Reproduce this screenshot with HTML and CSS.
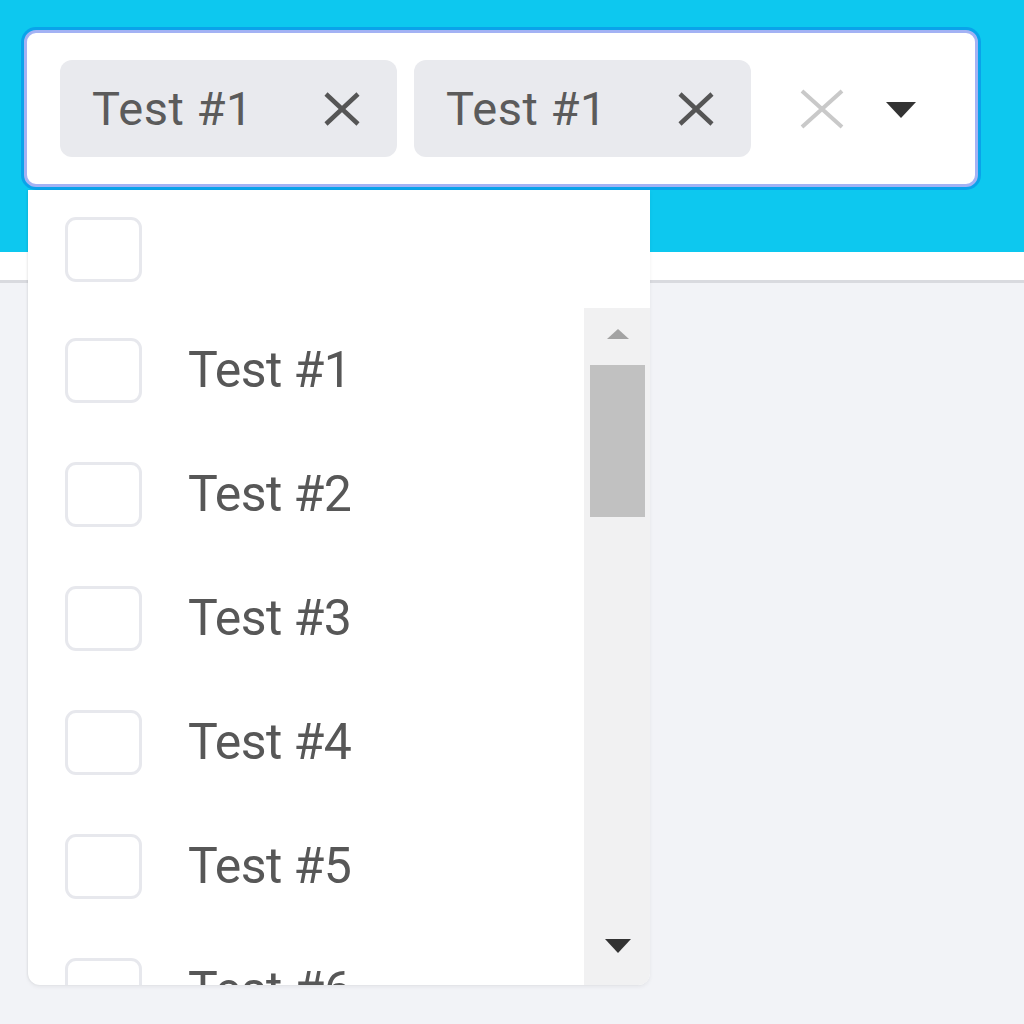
FILE: index.html
```html
<!DOCTYPE html>
<html>
<head>
<meta charset="utf-8">
<link rel="stylesheet" href="styles.css">
</head>
<body>
<header class="top">
  <div class="select-wrap">
    <div class="select">
      <div class="chips">
        <div class="chip"><span class="chip-label">Test #1</span>
          <svg class="chip-x" viewBox="0 0 40 36"><path d="M4 3 L36 33 M36 3 L4 33" stroke="#555" stroke-width="4.5" fill="none"/></svg>
        </div>
        <div class="chip"><span class="chip-label">Test #1</span>
          <svg class="chip-x" viewBox="0 0 40 36"><path d="M4 3 L36 33 M36 3 L4 33" stroke="#555" stroke-width="4.5" fill="none"/></svg>
        </div>
      </div>
      <div class="controls">
        <svg class="clear" viewBox="0 0 46 40"><path d="M3 2 L43 38 M43 2 L3 38" stroke="#c9c9c9" stroke-width="4" fill="none"/></svg>
        <svg class="caret" viewBox="0 0 30 16"><path d="M0 0 H30 L15 16 Z" fill="#333"/></svg>
      </div>
    </div>
    <div class="dropdown">
      <div class="option head">
        <span class="box"></span>
      </div>
      <div class="scroller">
        <div class="list">
          <div class="option"><span class="box"></span><span class="opt-label">Test #1</span></div>
          <div class="option"><span class="box"></span><span class="opt-label">Test #2</span></div>
          <div class="option"><span class="box"></span><span class="opt-label">Test #3</span></div>
          <div class="option"><span class="box"></span><span class="opt-label">Test #4</span></div>
          <div class="option"><span class="box"></span><span class="opt-label">Test #5</span></div>
          <div class="option"><span class="box"></span><span class="opt-label">Test #6</span></div>
        </div>
        <div class="scrollbar">
          <div class="sb-btn up"><svg viewBox="0 0 22 10"><path d="M0 10 H22 L11 0 Z" fill="#a3a3a3"/></svg></div>
          <div class="thumb"></div>
          <div class="sb-space"></div>
          <div class="sb-btn down"><svg viewBox="0 0 26 14"><path d="M0 0 H26 L13 14 Z" fill="#333"/></svg></div>
        </div>
      </div>
    </div>
  </div>
</header>
<div class="strip"></div>
<main class="page"></main>
</body>
</html>
```
FILE: styles.css
```css
* { box-sizing: border-box; }
html, body { margin: 0; padding: 0; }
body {
  background: #f2f3f7;
  font-family: Roboto, "Liberation Sans", Arial, sans-serif;
  height: 1024px;
  overflow: hidden;
}
.top {
  background: #0dc8ef;
  height: 252px;
  padding: 30px 46px 0 24px;
}
.strip {
  height: 31px;
  background: #fff;
  border-bottom: 3px solid #d9dadf;
}
.select-wrap {
  position: relative;
}
.select {
  height: 157px;
  background: #fff;
  border: 3px solid #a3b2f4;
  border-radius: 12px;
  box-shadow: 0 0 0 3px #0aa3ea;
  display: flex;
  align-items: center;
  padding: 0 0 0 33px;
}
.chips {
  display: flex;
  gap: 17px;
  align-items: center;
}
.chip {
  width: 337px;
  height: 97px;
  background: #e9eaee;
  border-radius: 12px;
  display: flex;
  align-items: center;
  justify-content: space-between;
  padding: 0 35px 0 32px;
}
.chip-label {
  font-size: 47px;
  color: #5b5b5b;
  letter-spacing: 0.5px;
}
.chip-x { width: 40px; height: 36px; }
.controls {
  display: flex;
  align-items: center;
  margin-left: 48px;
  gap: 41px;
}
.clear { width: 46px; height: 40px; }
.caret { width: 30px; height: 16px; margin-top: 2px; }
.dropdown {
  position: absolute;
  top: 100%;
  left: 4px;
  width: 622px;
  height: 795px;
  margin-top: 3px;
  background: #fff;
  border-radius: 0 0 12px 12px;
  box-shadow: 0 2px 4px rgba(0,0,0,0.06), -1px 0 2px rgba(0,0,0,0.05);
  display: flex;
  flex-direction: column;
  overflow: hidden;
}
.option {
  height: 124px;
  flex: none;
  display: flex;
  align-items: center;
  padding-left: 37px;
}
.option.head { height: 118px; }
.box {
  width: 77px;
  height: 65px;
  border: 3px solid #e7e8ed;
  border-radius: 11px;
  background: #fff;
  flex: none;
}
.opt-label {
  margin-left: 46px;
  font-size: 50px;
  color: #575757;
  letter-spacing: -0.6px;
}
.scroller {
  flex: 1;
  display: flex;
  min-height: 0;
}
.list {
  flex: 1;
  overflow: hidden;
}
.scrollbar {
  width: 66px;
  background: #f1f1f2;
  display: flex;
  flex-direction: column;
  padding: 0 5px 0 6px;
}
.sb-btn {
  height: 57px;
  display: flex;
  align-items: center;
  justify-content: center;
}
.sb-btn.up svg { width: 22px; height: 10px; margin-top: -6px; }
.sb-btn.down svg { width: 26px; height: 14px; margin-top: -22px; }
.thumb {
  height: 152px;
  background: #c1c1c1;
}
.sb-space { flex: 1; }
.page { height: 700px; }
```
